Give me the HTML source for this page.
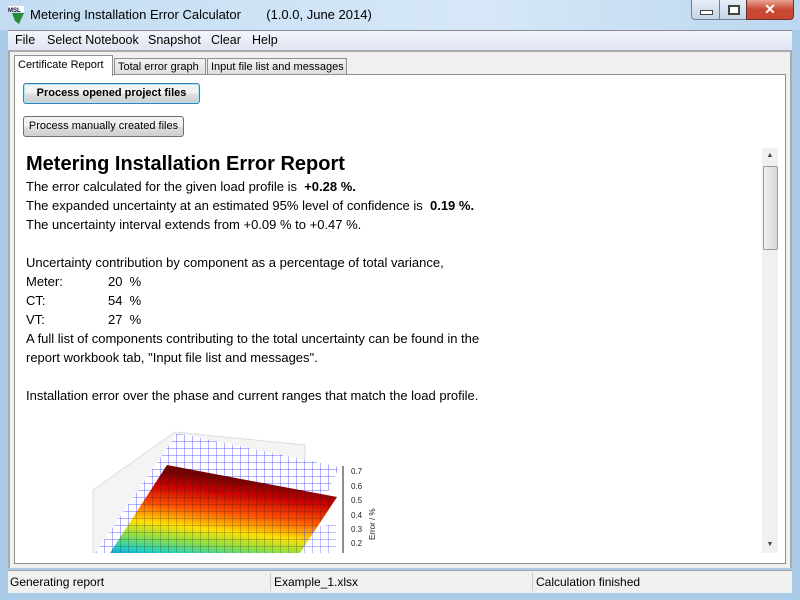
<!DOCTYPE html>
<html><head><style>
body{margin:0;width:800px;height:600px;overflow:hidden;background:#a9cbe8;font-family:"Liberation Sans",sans-serif;position:relative}
.abs{position:absolute}
#title{left:0;top:0;width:800px;height:30px;background:linear-gradient(90deg,#c3dcf2,#d6e8f8 60%,#bcd7ef);}
#menu{left:8px;top:30px;width:784px;height:20px;background:linear-gradient(#f4f6fb,#dce3f1);border-top:1px solid #889;font-size:12.5px}
#menu span{position:absolute;top:2px;white-space:nowrap}
#frame{left:8px;top:50px;width:784px;height:518px;background:#ababab}
#tabs{left:10px;top:52px;width:780px;height:516px;background:#f0f0f0}
.tab{position:absolute;top:58px;height:17px;border:1px solid #8e8f8f;border-bottom:none;background:linear-gradient(#f2f2f2,#dedede);font-size:11px;line-height:17px;padding:0 3px;box-sizing:border-box;white-space:nowrap;overflow:hidden}
#panel{left:14px;top:74px;width:772px;height:490px;background:#fff;border:1px solid #8e8f8f;box-sizing:border-box}
.btn{position:absolute;border:1px solid #707070;border-radius:3px;background:linear-gradient(#f2f2f2 45%,#dddddd 55%,#cfcfcf);font-size:11px;text-align:center;box-sizing:border-box;white-space:nowrap}
#report{left:20px;top:148px;width:758px;height:405px;background:#fff;font-size:13px;color:#000}
#report div{position:absolute;left:6px;white-space:nowrap}
#sb{left:762px;top:148px;width:16px;height:405px;background:#f0f0f0}
#status{left:8px;top:570px;width:784px;height:22px;background:#f0f0f0;border-top:1px solid #a0a0a0;font-size:12px}
#status span{position:absolute;top:4px}
</style></head><body>
<div id="title" class="abs">
 <svg class="abs" style="left:8px;top:6px" width="16" height="18"><rect x="0" y="0" width="16" height="6" fill="#fff"/><text x="0" y="6" font-size="6" font-family="Liberation Sans" font-weight="bold" fill="#003">MSL</text><polygon points="4,7 16,7 11,18 7,15" fill="#2a8a3a"/></svg>
 <span class="abs" style="left:30px;top:7px;font-size:13px;white-space:pre">Metering Installation Error Calculator       (1.0.0, June 2014)</span>
 <div class="abs" style="left:691px;top:0;width:27px;height:19px;border:1px solid #6f7f95;border-top:none;border-radius:0 0 0 4px;background:linear-gradient(#e6eef8,#c5d4e6)"><div class="abs" style="left:8px;top:10px;width:11px;height:3px;border:1px solid #444;background:#fff"></div></div>
 <div class="abs" style="left:719px;top:0;width:26px;height:19px;border:1px solid #6f7f95;border-top:none;background:linear-gradient(#e6eef8,#c5d4e6)"><div class="abs" style="left:8px;top:5px;width:8px;height:6px;border:2px solid #444;background:#fff"></div></div>
 <div class="abs" style="left:746px;top:0;width:46px;height:19px;border:1px solid #6a3030;border-top:none;border-radius:0 0 4px 0;background:linear-gradient(#e8a493,#c84a33 50%,#c9452f);color:#fff;font-weight:bold;font-size:14px;text-align:center;line-height:18px">✕</div>
</div>
<div id="menu" class="abs"><span style="left:7px">File</span><span style="left:39px">Select Notebook</span><span style="left:140px">Snapshot</span><span style="left:203px">Clear</span><span style="left:244px">Help</span></div>
<div id="frame" class="abs"></div>
<div id="tabs" class="abs"></div>
<div class="tab" style="left:114px;width:92px">Total error graph</div>
<div class="tab" style="left:207px;width:140px">Input file list and messages</div>
<div id="panel" class="abs"></div>
<div class="tab" style="left:14px;top:55px;height:21px;width:99px;background:#fff;line-height:19px">Certificate Report</div>
<div class="btn" style="left:23px;top:83px;width:177px;height:21px;font-weight:bold;line-height:19px;border-color:#3c7fb1;box-shadow:inset 0 0 0 1px #a9e4fc">Process opened project files</div>
<div class="btn" style="left:23px;top:116px;width:161px;height:21px;line-height:19px">Process manually created files</div>
<div id="report" class="abs">
 <div style="top:5px;font-size:20px;font-weight:bold">Metering Installation Error Report</div>
 <div style="top:31px">The error calculated for the given load profile is &nbsp;<b>+0.28 %.</b></div>
 <div style="top:50px">The expanded uncertainty at an estimated 95% level of confidence is &nbsp;<b>0.19 %.</b></div>
 <div style="top:69px">The uncertainty interval extends from +0.09 % to +0.47 %.</div>
 <div style="top:107px">Uncertainty contribution by component as a percentage of total variance,</div>
 <div style="top:126px">Meter:</div><div style="top:126px;left:88px">20 &nbsp;%</div>
 <div style="top:145px">CT:</div><div style="top:145px;left:88px">54 &nbsp;%</div>
 <div style="top:164px">VT:</div><div style="top:164px;left:88px">27 &nbsp;%</div>
 <div style="top:183px">A full list of components contributing to the total uncertainty can be found in the</div>
 <div style="top:202px">report workbook tab, "Input file list and messages".</div>
 <div style="top:240px">Installation error over the phase and current ranges that match the load profile.</div>
</div>
<svg class="abs" style="left:60px;top:425px" width="340" height="128" viewBox="60 425 340 128">
 <defs>
  <linearGradient id="g" x1="0" y1="0" x2="-0.3" y2="1">
   <stop offset="0" stop-color="#7a0000"/><stop offset="0.15" stop-color="#d00000"/><stop offset="0.35" stop-color="#ff5000"/><stop offset="0.55" stop-color="#ffe000"/><stop offset="0.7" stop-color="#90e040"/><stop offset="0.85" stop-color="#20d0c0"/><stop offset="1" stop-color="#1060ff"/>
  </linearGradient>
  <pattern id="bg" width="8" height="7" patternUnits="userSpaceOnUse"><path d="M0 0H8M0 0V7" stroke="#4848ff" stroke-width="1" fill="none"/></pattern>
  <pattern id="bk" width="8" height="7" patternUnits="userSpaceOnUse"><path d="M0 0H8M0 0V7" stroke="#222" stroke-width="0.8" fill="none"/></pattern>
 </defs>
 <polygon points="93,490 175,432 305,445 305,520 93,553" fill="#f4f4f4" stroke="#ddd"/>
 <polygon points="177,433 339,467 300,553 95,553" fill="#fff"/>
 <polygon points="177,433 339,467 300,553 95,553" fill="url(#bg)" opacity="0.85"/>
 <polygon points="167,465 337,497 300,553 110,553" fill="url(#g)"/>
 <polygon points="167,465 337,497 300,553 110,553" fill="url(#bk)" opacity="0.6"/>
 <polygon points="300,528 336,524 336,553 300,553" fill="url(#bg)" opacity="0.7"/>
 <g font-size="8" font-family="Liberation Sans" fill="#222">
  <line x1="343" y1="466" x2="343" y2="553" stroke="#222"/>
  <text x="351" y="474">0.7</text><text x="351" y="489">0.6</text><text x="351" y="503">0.5</text><text x="351" y="518">0.4</text><text x="351" y="532">0.3</text><text x="351" y="546">0.2</text>
  <text transform="translate(375,540) rotate(-90)">Error / %</text>
 </g>
</svg>
<div id="sb" class="abs">
 <div class="abs" style="left:0;top:0;width:16px;height:16px;font-size:7px;text-align:center;line-height:16px;color:#444">▲</div>
 <div class="abs" style="left:1px;top:18px;width:13px;height:82px;border:1px solid #999;border-radius:2px;background:linear-gradient(90deg,#eee,#d8d8d8)"></div>
 <div class="abs" style="left:0;top:389px;width:16px;height:16px;font-size:7px;text-align:center;line-height:16px;color:#444">▼</div>
</div>
<div id="status" class="abs"><span style="left:2px">Generating report</span><span style="left:266px">Example_1.xlsx</span><span style="left:528px">Calculation finished</span>
 <div class="abs" style="left:262px;top:2px;width:1px;height:18px;background:#ccc"></div><div class="abs" style="left:524px;top:2px;width:1px;height:18px;background:#ccc"></div></div>
</body></html>
